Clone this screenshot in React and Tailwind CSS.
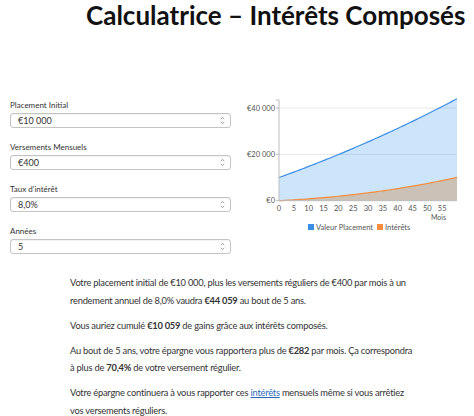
import React from "react";

const m = Math.pow(1.08, 1 / 12) - 1;
const vals = [10000];
for (let n = 1; n <= 60; n++) vals.push((vals[n - 1] + 400) * (1 + m));
const ints = vals.map((v, n) => v - 10000 - 400 * n);

const X0 = 39;
const XR = 217;
const Y0 = 105.7;
const sx = (n) => X0 + (n * (XR - X0)) / 60;
const sy = (v) => Y0 - (v * 46.3) / 20000;

function linePts(arr) {
  return arr.map((v, n) => `${sx(n).toFixed(2)},${sy(v).toFixed(2)}`).join(" ");
}
function areaPath(arr) {
  return `M${sx(0)},${Y0} L` + arr.map((v, n) => `${sx(n).toFixed(2)},${sy(v).toFixed(2)}`).join(" L") + ` L${sx(60)},${Y0} Z`;
}

function Chart() {
  const ticks = [0, 5, 10, 15, 20, 25, 30, 35, 40, 45, 50, 55];
  return (
    <svg width="234" height="145" viewBox="0 0 234 145" className="block" style={{ fontFamily: "Lato, sans-serif" }}>
      <line x1={X0} y1={sy(40000)} x2={XR} y2={sy(40000)} stroke="#e6e6e6" strokeWidth="1" />
      <line x1={X0} y1={sy(20000)} x2={XR} y2={sy(20000)} stroke="#e6e6e6" strokeWidth="1" />
      <path d={areaPath(vals)} fill="rgba(54,150,235,0.25)" />
      <path d={areaPath(ints)} fill="rgba(200,140,80,0.4)" />
      <polyline points={linePts(vals)} fill="none" stroke="#3a8ee6" strokeWidth="1.2" />
      <polyline points={linePts(ints)} fill="none" stroke="#f58d3c" strokeWidth="1.2" />
      <line x1={X0} y1="5" x2={X0} y2={Y0} stroke="#bdbdbd" strokeWidth="1" />
      <line x1={X0} y1={Y0} x2={XR} y2={Y0} stroke="#bdbdbd" strokeWidth="1" />
      <line x1={X0 - 3} y1="5" x2={X0} y2="5" stroke="#bdbdbd" strokeWidth="1" />
      {[0, 20000, 40000].map((v) => (
        <line key={v} x1={X0 - 3} y1={sy(v)} x2={X0} y2={sy(v)} stroke="#bdbdbd" strokeWidth="1" />
      ))}
      <text x="35" y={sy(40000) + 2.5} textAnchor="end" fontSize="7.5" fill="#555">€40 000</text>
      <text x="35" y={sy(20000) + 2.5} textAnchor="end" fontSize="7.5" fill="#555">€20 000</text>
      <text x="35" y={sy(0) + 2.5} textAnchor="end" fontSize="7.5" fill="#555">€0</text>
      {ticks.map((t) => (
        <text key={t} x={sx(t)} y="115.5" textAnchor="middle" fontSize="7.5" fill="#555">{t}</text>
      ))}
      <text x="206" y="124.5" textAnchor="end" fontSize="7" fill="#555">Mois</text>
      <rect x="68" y="129" width="6" height="6" fill="#3a8ee6" />
      <text x="76" y="134.5" fontSize="7.5" fill="#555">Valeur Placement</text>
      <rect x="137" y="129" width="6" height="6" fill="#f58d3c" />
      <text x="145" y="134.5" fontSize="7.5" fill="#555">Intérêts</text>
    </svg>
  );
}

function Spinner() {
  return (
    <svg width="5" height="9" viewBox="0 0 5 9" className="block">
      <path d="M0.8 3.2 L2.5 1.3 L4.2 3.2" fill="none" stroke="#8a8a8a" strokeWidth="0.8" />
      <path d="M0.8 5.8 L2.5 7.7 L4.2 5.8" fill="none" stroke="#8a8a8a" strokeWidth="0.8" />
    </svg>
  );
}

function Field({ label, value }) {
  return (
    <div className="flex flex-col">
      <div className="h-[10px] text-[8px] leading-[10px] text-[#333]">{label}</div>
      <div className="mt-[3px] flex h-[15px] items-center justify-between rounded-[3px] border border-[#c4c4c4] pl-[7px] pr-[5px] text-[9px] text-[#333] shadow-[inset_0_1px_1px_rgba(0,0,0,0.05)]">
        <span>{value}</span>
        <Spinner />
      </div>
    </div>
  );
}

export default function App() {
  return (
    <div className="h-[416px] w-[474px] overflow-hidden bg-white" style={{ fontFamily: "Lato, sans-serif" }}>
      <div className="pl-[86px] pt-[1px] text-[26px] font-bold leading-[28px] text-[#111]">
        Calculatrice – Intérêts Composés
      </div>
      <div className="mt-[66px] flex">
        <div className="ml-[10px] flex w-[221px] flex-col gap-[14px] pt-[5px]">
          <Field label="Placement Initial" value="€10 000" />
          <Field label="Versements Mensuels" value="€400" />
          <Field label="Taux d'intérêt" value="8,0%" />
          <Field label="Années" value="5" />
        </div>
        <div className="ml-[9px]">
          <Chart />
        </div>
      </div>
      <div className="ml-[70px] mt-[20px] w-[390px] text-[9.3px] leading-[17.5px] tracking-[-0.22px] text-[#333]">
        <p>
          Votre placement initial de €10 000, plus les versements réguliers de €400 par mois à un
          <br />
          rendement annuel de 8,0% vaudra <b>€44 059</b> au bout de 5 ans.
        </p>
        <p className="mt-[7.5px]">
          Vous auriez cumulé <b>€10 059</b> de gains grâce aux intérêts composés.
        </p>
        <p className="mt-[7.5px]">
          Au bout de 5 ans, votre épargne vous rapportera plus de <b>€282</b> par mois. Ça correspondra
          <br />
          à plus de <b>70,4%</b> de votre versement régulier.
        </p>
        <p className="mt-[7.5px]">
          Votre épargne continuera à vous rapporter ces <span className="text-[#2a6ab8] underline">intérêts</span> mensuels même si vous arrêtiez
          <br />
          vos versements réguliers.
        </p>
      </div>
    </div>
  );
}
